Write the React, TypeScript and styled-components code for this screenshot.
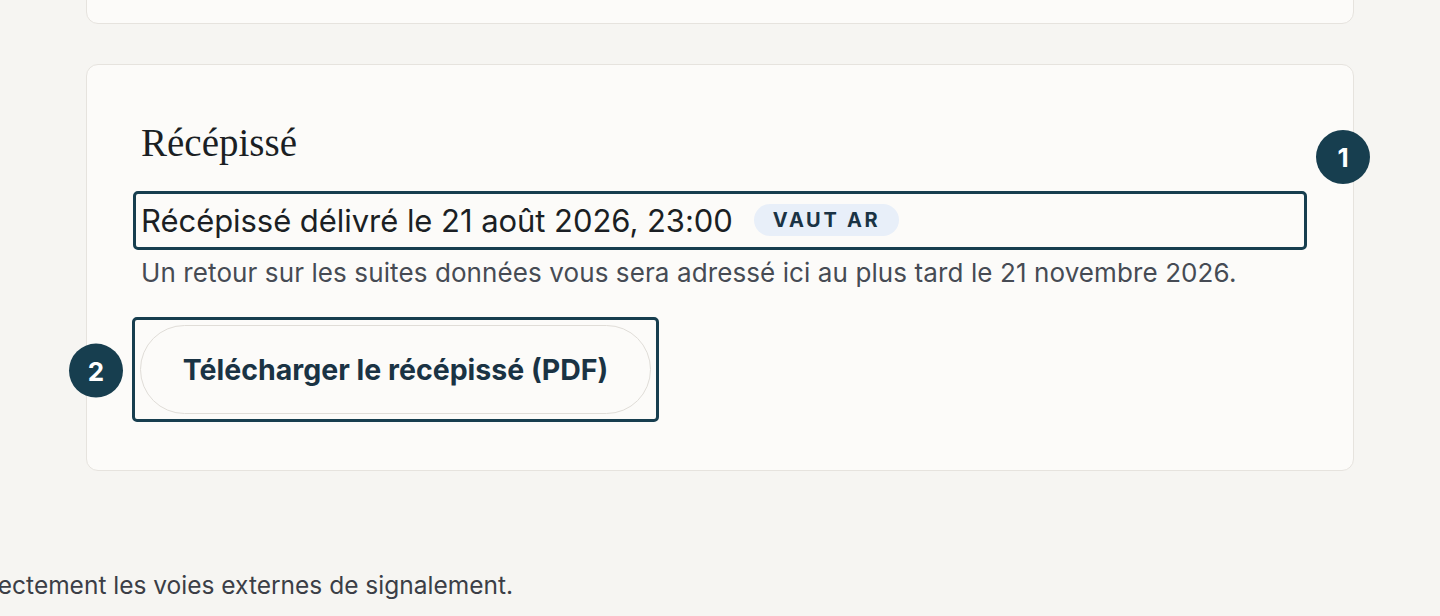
import styled, { createGlobalStyle } from 'styled-components';

const GlobalStyle = createGlobalStyle`
  html, body {
    margin: 0;
    padding: 0;
    background: #f6f5f2;
    overflow: hidden;
  }
  body {
    font-family: 'Inter', 'Noto Sans', sans-serif;
    color: #1b1f24;
  }
  * {
    box-sizing: border-box;
  }
`;

const App = () => {
    return (
        <>
            <GlobalStyle />
            <Page>
                <PrevCard />

                {/* Receipt card */}
                <Card>
                    <StepBadge $corner="card">1</StepBadge>
                    <Heading>Récépissé</Heading>
                    <FocusRing>
                        <Delivered>Récépissé délivré le 21 août 2026, 23:00</Delivered>
                        <Tag>Vaut AR</Tag>
                    </FocusRing>
                    <Hint>Un retour sur les suites données vous sera adressé ici au plus tard le 21 novembre 2026.</Hint>
                    <ButtonRing>
                        <StepBadge $corner="left">2</StepBadge>
                        <PillButton type="button">Télécharger le récépissé (PDF)</PillButton>
                    </ButtonRing>
                </Card>
            </Page>
            <FootNote>
                <span>Vous pouvez aussi saisir directement les voies externes de signalement.</span>
            </FootNote>
        </>
    );
};

const Page = styled.main`
  display: flex;
  flex-direction: column;
  gap: 40px;
  padding: 0 86px;
`;

const PrevCard = styled.div`
  height: 124px;
  margin-top: -100px;
  background: #fcfbf9;
  border: 1.5px solid #e6e3de;
  border-radius: 12px;
`;

const Card = styled.section`
  position: relative;
  height: 407px;
  padding: 55px 54px;
  background: #fcfbf9;
  border: 1.5px solid #e6e3de;
  border-radius: 12px;
  display: flex;
  flex-direction: column;
  align-items: flex-start;
`;

const Heading = styled.h2`
  margin: 0 0 24px;
  font-family: 'Liberation Serif', 'DejaVu Serif', serif;
  font-weight: 400;
  font-size: 39px;
  line-height: 1.2;
  color: #1b1f24;
`;

const FocusRing = styled.div`
  align-self: stretch;
  margin: 0 -8px;
  padding: 5px;
  border: 3px solid #173e4f;
  border-radius: 5px;
  display: flex;
  align-items: center;
  gap: 21px;
  height: 59px;
`;

const Delivered = styled.span`
  font-size: 31px;
  line-height: 43px;
  letter-spacing: -0.05px;
  color: #1b1f24;
`;

const Tag = styled.span`
  display: inline-flex;
  align-items: center;
  height: 32px;
  padding: 0 19px;
  border-radius: 16px;
  background: #e8eff9;
  color: #1a3344;
  font-size: 20px;
  font-weight: 700;
  letter-spacing: 2.7px;
  text-transform: uppercase;
`;

const Hint = styled.p`
  margin: 5px 0 0;
  font-size: 26px;
  line-height: 36px;
  letter-spacing: 0.1px;
  color: #464b54;
`;

const ButtonRing = styled.div`
  position: relative;
  margin: 26px 0 0 -9px;
  padding: 5px;
  border: 3px solid #173e4f;
  border-radius: 5px;
  display: inline-flex;
`;

const PillButton = styled.button`
  width: 511px;
  height: 89px;
  border: 1.5px solid #e0ddd8;
  border-radius: 45px;
  background: #fcfbf9;
  color: #1a3344;
  font-family: 'Inter', 'Noto Sans', sans-serif;
  font-size: 28.5px;
  font-weight: 700;
  cursor: pointer;
`;

const StepBadge = styled.span<{ $corner: 'card' | 'left' }>`
  position: absolute;
  width: 54px;
  height: 54px;
  border-radius: 50%;
  background: #173e4f;
  color: #ffffff;
  font-size: 26px;
  font-weight: 700;
  display: flex;
  align-items: center;
  justify-content: center;
  ${({ $corner }) =>
        $corner === 'card'
            ? 'top: 65px; right: -17px;'
            : 'left: -66px; top: 50%; transform: translateY(-47%);'}
`;

const FootNote = styled.div`
  width: 513px;
  margin-top: 96px;
  display: flex;
  justify-content: flex-end;
  white-space: nowrap;
  font-size: 24.5px;
  line-height: 36px;
  color: #3b3e46;
`;

export default App;
